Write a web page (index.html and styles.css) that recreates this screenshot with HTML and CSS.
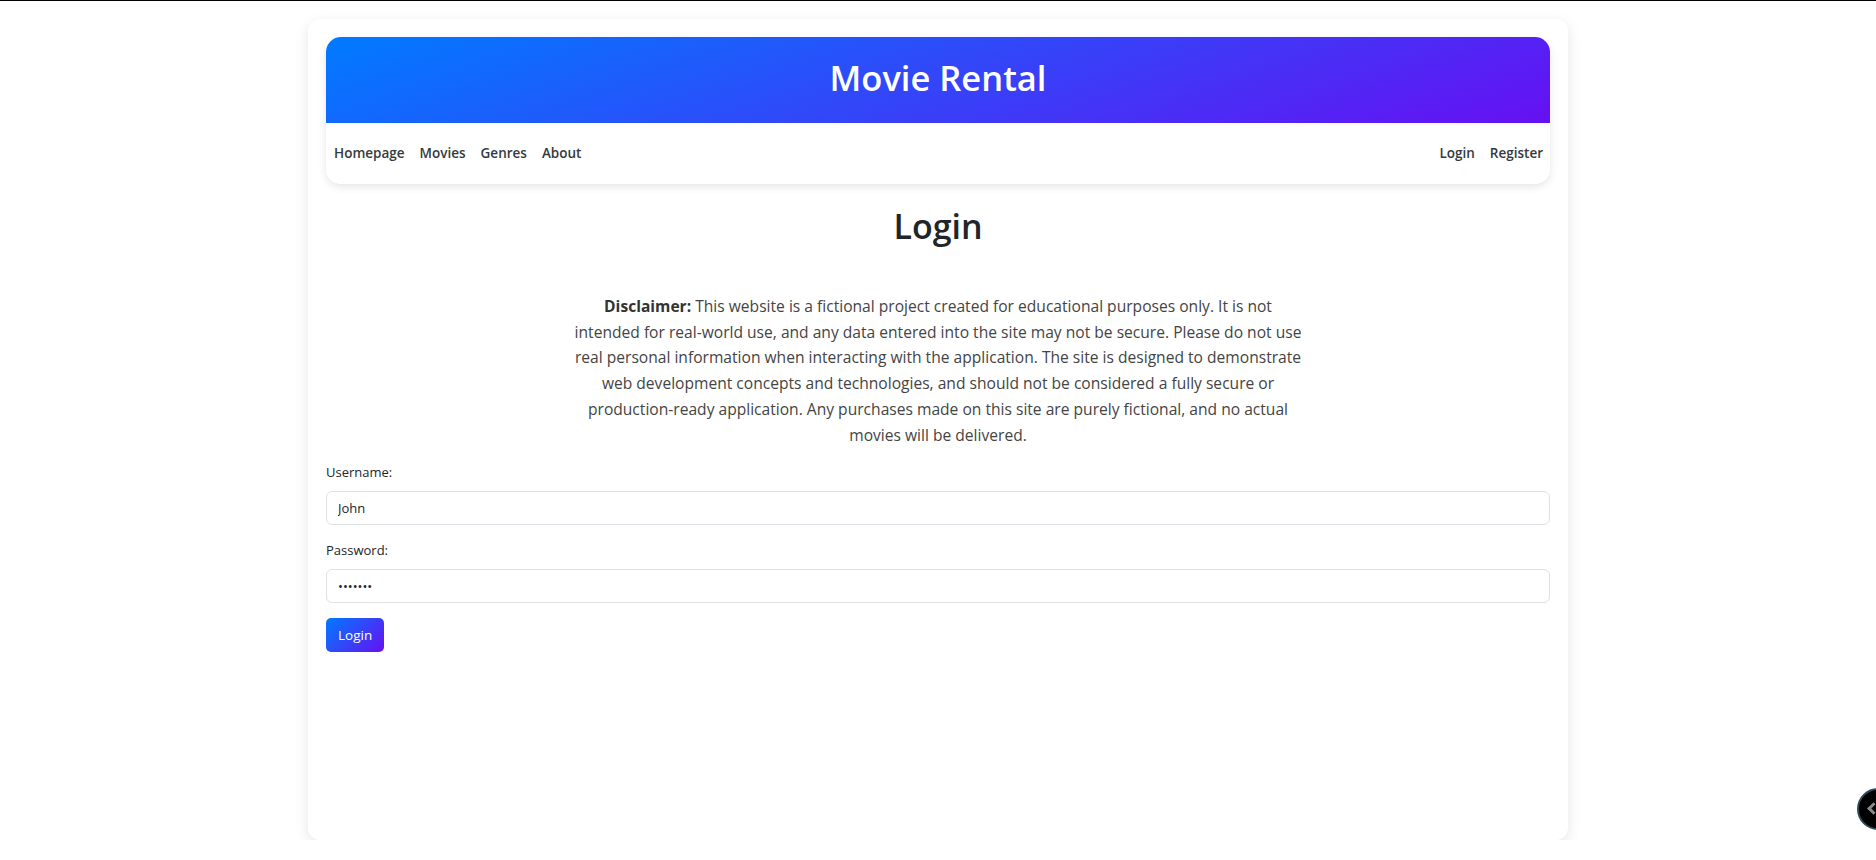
FILE: index.html
```html
<!DOCTYPE html>
<html lang="en">
<head>
<meta charset="utf-8">
<title>Movie Rental - Login</title>
<link rel="stylesheet" href="styles.css">
</head>
<body>
<div class="page">
  <div class="card">
    <header class="site-header">
      <div class="banner"><h1 class="brand">Movie Rental</h1></div>
      <nav class="navbar">
        <ul class="nav-left">
          <li><a href="#">Homepage</a></li>
          <li><a href="#">Movies</a></li>
          <li><a href="#">Genres</a></li>
          <li><a href="#">About</a></li>
        </ul>
        <ul class="nav-right">
          <li><a href="#">Login</a></li>
          <li><a href="#">Register</a></li>
        </ul>
      </nav>
    </header>
    <main class="content">
      <h2 class="page-title">Login</h2>
      <p class="disclaimer"><strong>Disclaimer:</strong> This website is a fictional project created for educational purposes only. It is not intended for real-world use, and any data entered into the site may not be secure. Please do not use real personal information when interacting with the application. The site is designed to demonstrate web development concepts and technologies, and should not be considered a fully secure or production-ready application. Any purchases made on this site are purely fictional, and no actual movies will be delivered.</p>
      <form class="login-form">
        <div class="form-group">
          <label for="username">Username:</label>
          <input id="username" type="text" value="John">
        </div>
        <div class="form-group">
          <label for="password">Password:</label>
          <input id="password" type="password" value="1234567">
        </div>
        <button type="button" class="btn">Login</button>
      </form>
    </main>
  </div>
</div>
<div class="side-toggle"><span class="chev"></span></div>
</body>
</html>
```
FILE: styles.css
```css
* { box-sizing: border-box; }
html, body { margin: 0; padding: 0; }
body {
  border-top: 1px solid #000;
  background: #fff;
  font-family: "Open Sans", "Liberation Sans", sans-serif;
  color: #212529;
  overflow: hidden;
}
.page { padding: 18px 0 0; }
.card {
  width: 1260px;
  min-height: 821px;
  margin: 0 auto;
  padding: 18px;
  background: #fff;
  border-radius: 12px;
  box-shadow: 0 4px 14px rgba(0,0,0,0.10);
}
.site-header {
  border-radius: 15px;
  overflow: hidden;
  box-shadow: 0 3px 8px rgba(0,0,0,0.10);
}
.banner {
  height: 86px;
  padding-bottom: 3px;
  display: flex;
  align-items: center;
  justify-content: center;
  background: linear-gradient(160deg, #007bff 0%, #6610f2 100%);
}
.brand {
  margin: 0;
  color: #fff;
  font-size: 34.5px;
  font-weight: 600;
  line-height: 1;
}
.navbar {
  height: 61px;
  padding-bottom: 2px;
  display: flex;
  align-items: center;
  justify-content: space-between;
  background: #fff;
}
.navbar ul { list-style: none; margin: 0; padding: 0; display: flex; }
.navbar a {
  display: block;
  padding: 0 7px 0 8px;
  font-size: 13.5px;
  font-weight: 600;
  color: #343a40;
  text-decoration: none;
}
.page-title {
  margin: 22px 0 0;
  text-align: center;
  font-size: 34px;
  font-weight: 600;
  line-height: 1.2;
  color: #212529;
}
.disclaimer {
  max-width: 730px;
  margin: 47px auto 13px;
  text-align: center;
  font-size: 15.6px;
  line-height: 25.8px;
  color: #444;
}
.disclaimer strong { color: #333; }
.form-group { margin-bottom: 15px; }
.form-group label {
  display: block;
  margin-bottom: 8px;
  font-size: 13px;
  line-height: 21px;
  color: #212529;
}
.form-group input {
  display: block;
  width: 100%;
  height: 34px;
  padding: 0 11px;
  border: 1px solid #dee2e6;
  border-radius: 6px;
  font-family: inherit;
  font-size: 13px;
  color: #212529;
  background: #fff;
}
.btn {
  height: 34px;
  padding: 0 12px;
  border: 0;
  border-radius: 5px;
  background: linear-gradient(135deg, #007bff 0%, #6610f2 100%);
  color: #fff;
  font-family: inherit;
  font-size: 13.5px;
}
.side-toggle {
  position: fixed;
  left: 1857px;
  top: 788px;
  width: 42px;
  height: 42px;
  border-radius: 50%;
  background: #000;
  border: 2px solid #2f4a58;
}
.chev {
  position: absolute;
  left: 10px;
  top: 14px;
  width: 9px;
  height: 9px;
  border-left: 3px solid #8a8a8a;
  border-bottom: 3px solid #8a8a8a;
  transform: rotate(45deg);
}
```
